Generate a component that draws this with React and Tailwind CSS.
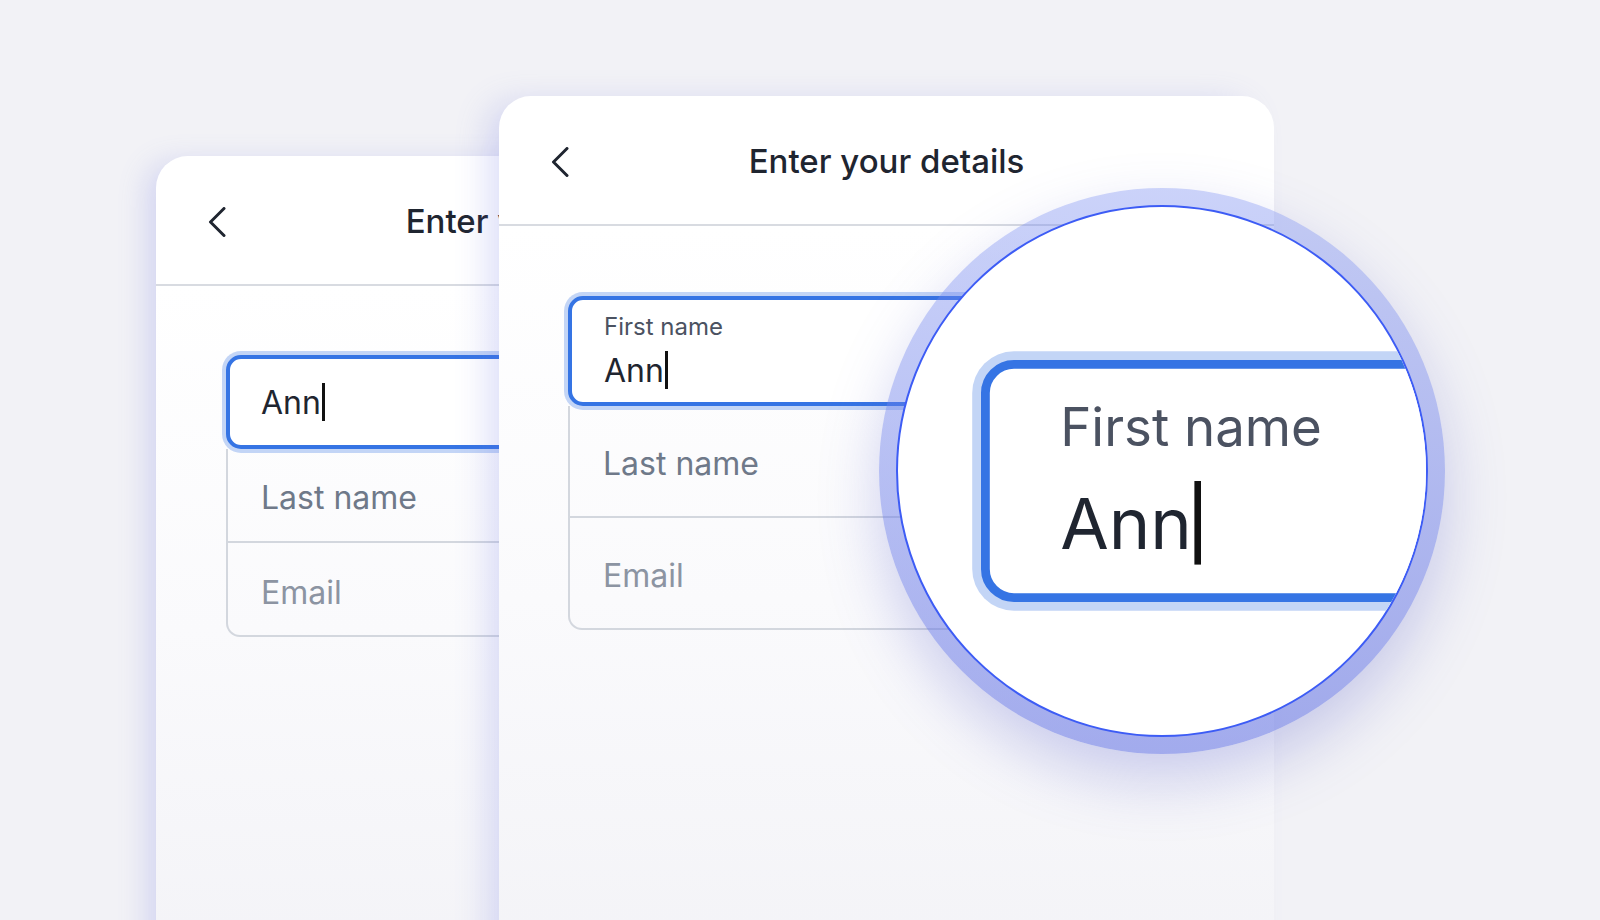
import React from 'react';

const ChevronLeft = () => (
  <svg width="18" height="30" viewBox="0 0 18 30" fill="none" className="block">
    <path d="M16 1.5 L2.5 15 L16 28.5" stroke="#1f2530" strokeWidth="3" strokeLinecap="round" strokeLinejoin="round" />
  </svg>
);

const Cursor = () => (
  <span className="inline-block w-[3px] h-[38px] bg-[#111] align-[-7px] ml-[1px]" />
);

// the blue focused field, with floating label (front) or without (back)
const FocusedField = ({ withLabel }) => (
  <div
    className={
      withLabel
        ? 'h-[110px] rounded-[15px] border-4 border-[#3574e4] bg-white pl-[32px] pt-[15px] shadow-[0_0_0_4px_#c3d5f6]'
        : 'h-[94px] rounded-[15px] border-4 border-[#3574e4] bg-white pl-[31px] flex items-center shadow-[0_0_0_4px_#c3d5f6]'
    }
  >
    {withLabel && <div className="text-[24px] leading-[24px] text-[#4b5261]">First name</div>}
    <div className={withLabel ? 'mt-[12px] text-[32px] leading-[32px] text-[#1f2530]' : 'text-[32px] leading-[32px] text-[#1f2530]'}>
      Ann
      <Cursor />
    </div>
  </div>
);

const Magnifier = () => (
  <div className="absolute left-[380px] top-[92px] w-[566px] h-[566px] rounded-full p-[17px] bg-linear-to-b from-[rgba(118,138,240,0.38)] to-[rgba(92,108,226,0.55)] shadow-[0_26px_60px_rgba(86,94,200,0.28)]">
    <div className="relative w-full h-full rounded-full border-2 border-[#3d5cf5] bg-white overflow-hidden">
      <div className="absolute left-[83px] top-[153px] w-[637px] origin-top-left scale-[2.2]">
        <FocusedField withLabel />
      </div>
    </div>
  </div>
);

const Card = ({ front }) => (
  <div
    className={
      front
        ? 'relative mt-[96px] -ml-[432px] w-[775px] h-[880px] shrink-0 rounded-t-[32px] bg-white flex flex-col shadow-[-18px_0_34px_-8px_rgba(104,112,226,0.24)]'
        : 'relative mt-[156px] w-[775px] h-[820px] shrink-0 rounded-t-[32px] bg-white flex flex-col shadow-[-16px_0_30px_-8px_rgba(104,112,226,0.24)]'
    }
  >
    <div className="h-[130px] shrink-0 grid grid-cols-[1fr_auto_1fr] items-center px-[52px] pt-[4px] border-b-2 border-[#d8dbe1]">
      <div>
        <ChevronLeft />
      </div>
      <div className="text-[33px] font-medium text-[#1f2530] whitespace-nowrap">Enter your details</div>
      <div />
    </div>

    <div className={front ? 'flex-1 px-[69px] pt-[70px] bg-linear-to-b from-white via-[#fafafc] to-[#f3f3f7]' : 'flex-1 px-[70px] pt-[69px] bg-linear-to-b from-white via-[#fafafc] to-[#f3f3f7]'}>
      <FocusedField withLabel={front} />
      <div className="border-x-2 border-b-2 border-[#d3d7de] rounded-b-[14px] text-[32px] leading-[32px]">
        <div className={front ? 'h-[112px] border-b-2 border-[#d3d7de] pl-[33px] pt-[42px] text-[#6f7989]' : 'h-[94px] border-b-2 border-[#d3d7de] pl-[33px] pt-[33px] text-[#6f7989]'}>
          Last name
        </div>
        <div className={front ? 'h-[110px] pl-[33px] pt-[42px] text-[#8c94a2]' : 'h-[92px] pl-[33px] pt-[34px] text-[#8c94a2]'}>
          Email
        </div>
      </div>
    </div>

    {front && <Magnifier />}
  </div>
);

export default function App() {
  return (
    <div className="relative w-[1600px] h-[920px] overflow-hidden bg-[#f2f2f6] font-['Inter',sans-serif]">
      <div className="flex items-start pl-[156px]">
        <Card />
        <Card front />
      </div>
    </div>
  );
}
